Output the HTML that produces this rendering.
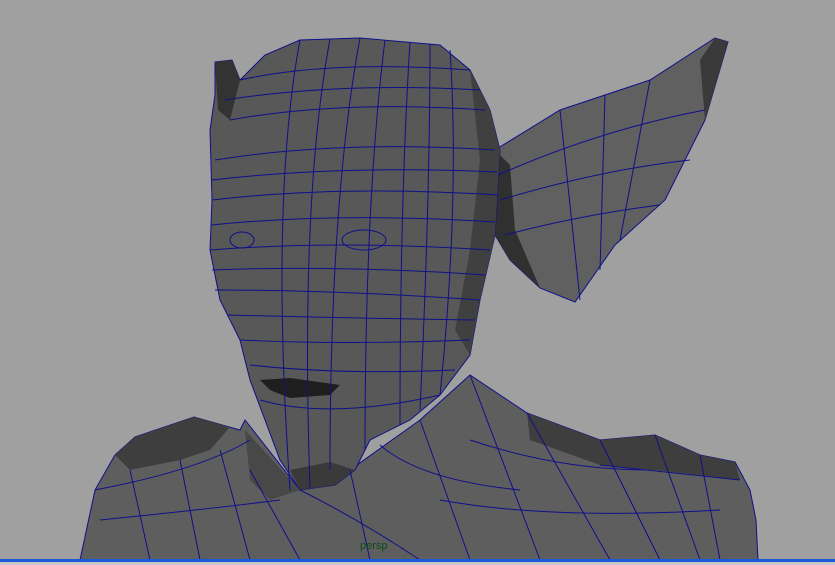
<!DOCTYPE html>
<html><head><meta charset="utf-8"><style>
html,body{margin:0;padding:0;width:835px;height:565px;overflow:hidden;background:#a0a0a0}
svg{display:block}
</style></head><body>
<svg width="835" height="565" viewBox="0 0 835 565" xmlns="http://www.w3.org/2000/svg">
<rect width="835" height="565" fill="#a0a0a0"/>
<polygon points="80,560 95,490 115,455 135,437 194,417 240,430 245,420 300,490 350,470 420,420 470,375 500,395 527,413 600,440 655,435 700,455 735,462 750,490 756,520 758,560" fill="#5e5e5e" stroke="#10108a" stroke-width="1"/>
<polygon points="527,413 600,440 655,435 700,455 735,462 740,480 700,475 655,470 600,465 530,440" fill="#3e3e3e"/>
<polygon points="115,455 135,437 194,417 230,427 210,450 180,460 130,470" fill="#3e3e3e"/>
<polygon points="245,430 300,490 270,500 250,480" fill="#484848"/>
<polygon points="495,150 560,110 650,80 715,38 728,42 705,120 665,200 615,245 575,302 540,288 510,260 495,235" fill="#606060" stroke="#10108a"/>
<polygon points="495,150 510,165 515,230 540,288 510,260 495,235" fill="#303030"/>
<polygon points="715,38 728,42 705,120 700,60" fill="#3a3a3a"/>
<polygon points="215,62 232,60 240,80 265,55 300,40 360,38 440,45 470,70 490,110 500,150 495,235 480,300 470,355 440,395 410,420 370,440 355,470 335,485 300,490 280,460 265,420 250,380 240,340 220,300 210,250 212,200 210,130 215,95" fill="#585858" stroke="#10108a"/>
<polygon points="215,62 232,60 240,80 230,120 218,110" fill="#333"/>
<polygon points="470,70 490,110 500,150 495,235 480,300 470,355 455,330 470,250 480,160" fill="#404040"/>
<polygon points="260,380 290,378 340,385 330,395 290,398 270,390" fill="#1e1e1e"/>
<polygon points="355,470 335,485 300,490 290,470 330,462" fill="#3a3a3a"/>
<g fill="none" stroke="#10108a" stroke-width="1">
<path d="M240,80 Q330,60 470,70 M230,120 Q340,100 485,110 M215,160 Q340,140 495,150 M212,200 Q340,185 498,195 M210,250 Q340,240 490,250 M215,290 Q340,290 480,300 M240,340 Q340,345 470,340 M260,400 Q330,420 440,395"/>
<path d="M225,100 Q340,82 480,90 M212,180 Q340,165 497,172 M211,225 Q340,212 495,222 M212,270 Q340,265 485,275 M228,315 Q340,318 475,320 M250,365 Q340,375 455,370"/>
<path d="M300,40 Q270,200 290,490 M360,38 Q330,200 330,470 M410,42 Q400,200 400,425 M450,50 Q460,200 440,395 M330,39 Q300,200 310,488 M385,40 Q365,200 365,450 M430,44 Q430,200 420,410"/>
<path d="M230,240 a12,8 0 1,0 24,0 a12,8 0 1,0 -24,0 M342,240 a22,10 0 1,0 44,0 a22,10 0 1,0 -44,0"/>
<path d="M560,110 L580,300 M650,80 L620,240 M500,200 Q600,170 690,160 M605,95 L600,270 M498,175 Q600,130 705,110 M505,235 Q580,215 660,205"/>
<path d="M95,490 Q200,470 250,440 M130,470 L150,560 M180,460 L200,560 M220,450 L250,560 M300,490 Q360,520 420,560 M350,470 L370,560 M420,420 L470,560 M470,375 L540,560 M527,413 L610,560 M600,440 L660,560 M655,435 L700,560 M470,440 Q560,470 650,470 M440,500 Q550,520 720,510 M600,465 L740,480 M100,520 Q200,510 280,500 M700,455 L720,560 M250,470 L300,560 M380,445 Q420,480 520,490"/>
</g>
<text x="360" y="549" font-family="Liberation Sans, sans-serif" font-size="11" fill="#0a4a1a">persp</text>
<rect x="0" y="559" width="835" height="3" fill="#1a5ad8"/>
<rect x="0" y="562" width="835" height="3" fill="#c8c8c8"/>
</svg>
</body></html>
